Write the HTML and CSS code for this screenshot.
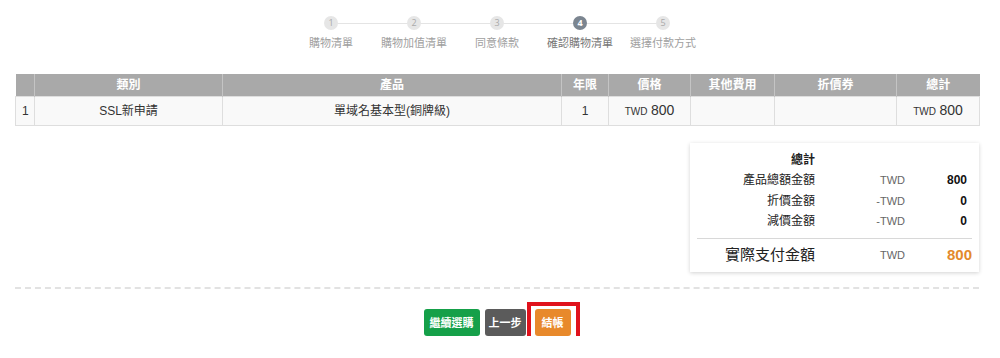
FILE: index.html
```html
<!DOCTYPE html>
<html lang="zh-Hant">

<head>
    <meta charset="UTF-8">
    <meta name="viewport" content="width=device-width, initial-scale=1.0">
    <title>確認購物清單</title>
    <link rel="stylesheet" href="styles.css">
</head>

<body>

    <div class="page">

        <div class="steps">
            <div class="step"><span class="dot">1</span><span class="label">購物清單</span></div>
            <div class="step"><span class="dot">2</span><span class="label">購物加值清單</span></div>
            <div class="step"><span class="dot">3</span><span class="label">同意條款</span></div>
            <div class="step active"><span class="dot">4</span><span class="label">確認購物清單</span></div>
            <div class="step last"><span class="dot">5</span><span class="label">選擇付款方式</span></div>
        </div>

        <table class="cart">
            <colgroup>
                <col style="width: 19px">
                <col style="width: 188px">
                <col style="width: 339px">
                <col style="width: 47px">
                <col style="width: 82px">
                <col style="width: 84px">
                <col style="width: 122px">
                <col style="width: 83px">
            </colgroup>
            <thead>
                <tr>
                    <th></th>
                    <th>類別</th>
                    <th>產品</th>
                    <th>年限</th>
                    <th>價格</th>
                    <th>其他費用</th>
                    <th>折價券</th>
                    <th>總計</th>
                </tr>
            </thead>
            <tbody>
                <tr>
                    <td class="no">1</td>
                    <td>SSL新申請</td>
                    <td>單域名基本型(銅牌級)</td>
                    <td>1</td>
                    <td><small>TWD</small> <span class="num">800</span></td>
                    <td></td>
                    <td></td>
                    <td><small>TWD</small> <span class="num">800</span></td>
                </tr>
            </tbody>
        </table>

        <div class="summary-wrap">
            <div class="summary">
                <div class="row head">
                    <span class="name">總計</span>
                    <span class="cur"></span>
                    <span class="amt"></span>
                </div>
                <div class="row">
                    <span class="name">產品總額金額</span>
                    <span class="cur">TWD</span>
                    <span class="amt">800</span>
                </div>
                <div class="row">
                    <span class="name">折價金額</span>
                    <span class="cur">-TWD</span>
                    <span class="amt">0</span>
                </div>
                <div class="row">
                    <span class="name">減價金額</span>
                    <span class="cur">-TWD</span>
                    <span class="amt">0</span>
                </div>
                <div class="row total">
                    <span class="name">實際支付金額</span>
                    <span class="cur">TWD</span>
                    <span class="amt">800</span>
                </div>
            </div>
        </div>

        <div class="actions">
            <button class="btn green">繼續選購</button>
            <button class="btn dark">上一步</button>
            <button class="btn orange marked">結帳</button>
        </div>

    </div>

</body>

</html>
```

FILE: styles.css
```css
* {
    margin: 0;
    padding: 0;
    box-sizing: border-box;
}

body {
    background-color: #fff;
    color: #333;
    font-family: "Liberation Sans", "Noto Sans CJK TC", sans-serif;
    font-size: 12px;
}

.page {
    width: 964px;
    margin-left: 15px;
    padding-top: 16px;
}

/* steps */
.steps {
    display: flex;
    justify-content: center;
    height: 58px;
}

.step {
    width: 83px;
    display: flex;
    flex-direction: column;
    align-items: center;
    position: relative;
}

.step::after {
    content: "";
    position: absolute;
    top: 7px;
    left: 50%;
    width: 83px;
    height: 1px;
    background: #e4e4e4;
}

.step.last::after {
    display: none;
}

.dot {
    width: 14px;
    height: 14px;
    border-radius: 50%;
    background: #e6e6e6;
    color: #aaa;
    font-family: "Open Sans", sans-serif;
    font-size: 9px;
    line-height: 14px;
    text-align: center;
    position: relative;
    z-index: 1;
}

.label {
    margin-top: 6px;
    font-family: "Open Sans", "Noto Sans CJK TC", sans-serif;
    font-size: 11px;
    line-height: 14px;
    color: #a0a0a0;
    white-space: nowrap;
}

.step.active .dot {
    background: #7b8590;
    color: #fff;
    font-weight: bold;
}

.step.active .label {
    color: #777;
}

/* cart table */
.cart {
    width: 964px;
    border-collapse: collapse;
    table-layout: fixed;
}

.cart th {
    background: #a9a9a9;
    color: #fff;
    font-weight: bold;
    font-size: 12px;
    height: 22px;
    line-height: 14px;
    border-left: 1px solid #c4c4c4;
    text-align: center;
}

.cart th:first-child {
    border-left: none;
}

.cart td {
    background: #f9f9f9;
    border: 1px solid #dedede;
    height: 29px;
    line-height: 16px;
    text-align: center;
    vertical-align: middle;
    font-size: 12px;
    color: #333;
}

.cart td.no {
    text-align: left;
    padding-left: 6px;
}

.cart small {
    font-size: 10px;
}

.cart .num {
    font-size: 14px;
}

/* summary */
.summary-wrap {
    display: flex;
    justify-content: flex-end;
    margin-top: 17px;
}

.summary {
    width: 289px;
    padding: 7px 12px 3px 10px;
    box-shadow: 0 1px 4px rgba(0, 0, 0, 0.18);
    background: #fff;
}

.row {
    display: grid;
    grid-template-columns: 115px 90px 62px;
    height: 20.5px;
    align-items: center;
    font-size: 12px;
    line-height: 14px;
}

.name {
    text-align: right;
    color: #222;
}

.cur {
    text-align: right;
    color: #666;
    font-size: 11px;
}

.amt {
    text-align: right;
    font-weight: bold;
    color: #111;
}

.row.head .name {
    font-weight: bold;
}

.row.total {
    margin-top: 6px;
    padding-top: 2px;
    border-top: 1px solid #d8d8d8;
    height: 31px;
    margin-left: -3px;
    margin-right: -5px;
    grid-template-columns: 118px 90px 67px;
}

.row.total .name {
    font-size: 15px;
    font-weight: normal;
}

.row.total .amt {
    font-size: 15px;
    color: #e38a2c;
}

/* buttons */
.actions {
    margin-top: 15px;
    border-top: 2px dashed #e2e2e2;
    padding-top: 20px;
    display: flex;
    justify-content: center;
    gap: 5px;
}

.btn {
    border: none;
    border-radius: 3px;
    color: #fff;
    font-family: "Liberation Sans", "Noto Sans CJK TC", sans-serif;
    font-size: 11px;
    font-weight: bold;
    height: 27px;
    padding: 0 6px;
}

.green {
    background: #15a049;
}

.dark {
    background: #5b5b5b;
    padding: 0 4px;
}

.orange {
    background: #e8892b;
    margin-left: 4px;
    padding: 0 7px;
}

.marked {
    position: relative;
}

.marked::after {
    content: "";
    position: absolute;
    top: -7px;
    bottom: -8px;
    left: -8px;
    right: -9px;
    border: 4px solid #e0121c;
}
```
